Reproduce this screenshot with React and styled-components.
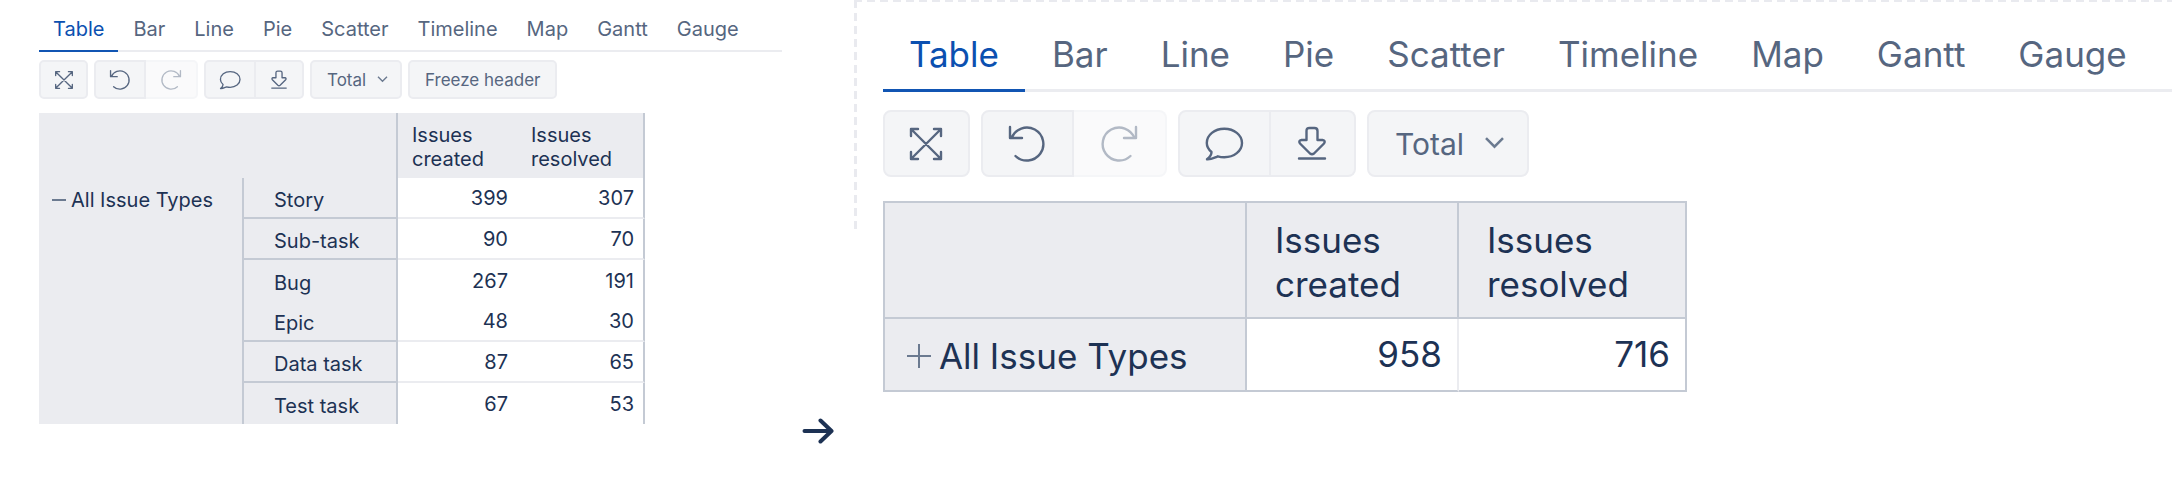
import React from 'react';
import styled, { createGlobalStyle, css, ThemeProvider } from 'styled-components';

const GlobalStyle = createGlobalStyle`
  * {
    box-sizing: border-box;
  }

  body {
    margin: 0;
    background: #ffffff;
    font-family: Inter, "Liberation Sans", sans-serif;
    color: #1d3254;
  }

  button, select {
    font-family: inherit;
  }
`;

// sizes of the two report previews
const small = {
  tabFont: 20,
  tabPad: 14,
  tabGap: 1,
  tabsHeight: 52,
  tabTop: 8,
  line: 2,
  toolbarTop: 8,
  toolbarGap: 6,
  buttonHeight: 39,
  buttonWidth: 49,
  wideWidth: 52,
  exportWidth: 48,
  radius: 5,
  icon: 20,
  buttonFont: 17,
  selectWidth: 92,
  selectPad: 15,
  chevron: 9,
  tableTop: 14,
  cellFont: 20,
  cellLine: 24,
  headHeight: 65,
  rowHeight: 41,
  rowPad: 30,
  cellPad: 14,
  cellTop: 4,
  numberPad: 9,
  numberBottom: 0,
  toggle: 14,
  toggleGap: 5,
};

const large = {
  tabFont: 35,
  tabPad: 26,
  tabGap: 1,
  tabsHeight: 92,
  tabTop: 18,
  line: 3,
  toolbarTop: 18,
  toolbarGap: 11,
  buttonHeight: 67,
  buttonWidth: 87,
  wideWidth: 93,
  exportWidth: 85,
  radius: 8,
  icon: 36,
  buttonFont: 30,
  selectWidth: 162,
  selectPad: 26,
  chevron: 17,
  tableTop: 24,
  cellFont: 35,
  cellLine: 44,
  headHeight: 116,
  rowHeight: 73,
  rowPad: 22,
  cellPad: 28,
  cellTop: 3,
  numberPad: 15,
  numberBottom: 2,
  toggle: 24,
  toggleGap: 8,
};

// ---------------- page ----------------

const Page = styled.main`
  display: grid;
  grid-template-columns: 36% 72px minmax(0, 1fr);
  min-height: 100vh;
  overflow: hidden;
`;

const BeforePanel = styled.section`
  padding-left: 39px;
`;

const AfterPanel = styled.section`
  padding-left: 29px;
  background-image:
    repeating-linear-gradient(to right, #e9eaef 0 8px, transparent 8px 13px),
    repeating-linear-gradient(to bottom, #e9eaef 0 8px, transparent 8px 13px);
  background-size: 100% 2px, 3px 229px;
  background-repeat: no-repeat;
`;

const ArrowColumn = styled.div`
  display: flex;
  align-items: flex-end;
  justify-content: center;
  padding-bottom: 59px;
`;

// ---------------- tabs ----------------

const Tabs = styled.nav`
  display: flex;
  gap: ${({ theme }) => theme.tabGap}px;
  height: ${({ theme }) => theme.tabsHeight}px;
  box-shadow: inset 0 -${({ theme }) => theme.line}px #ebecf0;
`;

const Tab = styled.button`
  padding: ${({ theme }) => theme.tabTop}px ${({ theme }) => theme.tabPad}px 0;
  border: 0;
  border-bottom: ${({ theme }) => theme.line}px solid ${({ $active }) => ($active ? '#1155b3' : 'transparent')};
  background: none;
  color: ${({ $active }) => ($active ? '#0b50b0' : '#566680')};
  font-size: ${({ theme }) => theme.tabFont}px;
  white-space: nowrap;
`;

// ---------------- toolbar ----------------

const Toolbar = styled.div`
  display: flex;
  gap: ${({ theme }) => theme.toolbarGap}px;
  margin-top: ${({ theme }) => theme.toolbarTop}px;
`;

const ButtonGroup = styled.div`
  display: flex;
`;

const control = css`
  height: ${({ theme }) => theme.buttonHeight}px;
  border: 2px solid #ebecf0;
  border-radius: ${({ theme }) => theme.radius}px;
  background: #f4f5f7;
  color: #566680;
  font-size: ${({ theme }) => theme.buttonFont}px;
`;

const IconButton = styled.button`
  ${control}
  display: flex;
  align-items: center;
  justify-content: center;
  width: ${({ theme, $size = 'buttonWidth' }) => theme[$size]}px;
  padding: 0;

  ${ButtonGroup} &:first-child {
    border-top-right-radius: 0;
    border-bottom-right-radius: 0;
  }

  ${ButtonGroup} &:last-child {
    border-left: 0;
    border-top-left-radius: 0;
    border-bottom-left-radius: 0;
  }

  &:disabled {
    opacity: 0.45;
  }
`;

const TextButton = styled.button`
  ${control}
  padding: 0 15px;
`;

const SelectBox = styled.div`
  display: grid;
  align-items: center;
  width: ${({ theme }) => theme.selectWidth}px;

  > * {
    grid-area: 1 / 1;
  }

  svg {
    justify-self: end;
    margin-right: ${({ theme }) => theme.selectPad}px;
    pointer-events: none;
  }
`;

const Select = styled.select`
  ${control}
  width: 100%;
  padding: 0 0 0 ${({ theme }) => theme.selectPad}px;
  appearance: none;
`;

const Icon = styled.svg`
  width: ${({ theme }) => theme.icon}px;
  height: ${({ theme }) => theme.icon}px;
  overflow: visible;
  fill: none;
  stroke: currentColor;
  stroke-width: 2.4;
  stroke-linecap: round;
  stroke-linejoin: round;
`;

const Chevron = styled.svg`
  width: ${({ theme }) => theme.chevron}px;
  height: ${({ theme }) => theme.chevron}px;
  overflow: visible;
  fill: none;
  stroke: #6b7a90;
  stroke-width: 2.4;
`;

// ---------------- table ----------------

const DataTable = styled.table`
  margin-top: ${({ theme }) => theme.tableTop}px;
  table-layout: fixed;
  border-spacing: 0;
  border: 0 solid #c4cad4;
  border-width: ${({ $framed }) => ($framed ? '2px 0 0 2px' : '0')};
  font-size: ${({ theme }) => theme.cellFont}px;
  line-height: ${({ theme }) => theme.cellLine}px;
`;

const Col = styled.col`
  width: ${({ $width }) => $width}px;
`;

const HeadCell = styled.th`
  height: ${({ theme }) => theme.headHeight}px;
  padding: 3px ${({ theme }) => theme.cellPad}px 0;
  border: 0 solid #c4cad4;
  border-right-width: ${({ $right }) => ($right ? 2 : 0)}px;
  border-bottom-width: ${({ $bottom }) => ($bottom ? 2 : 0)}px;
  background: #ebecf0;
  font-weight: 400;
  text-align: left;
`;

const RowHead = styled.th`
  height: ${({ theme }) => theme.rowHeight}px;
  padding: ${({ theme }) => theme.cellTop}px 0 0 ${({ theme }) => theme.rowPad}px;
  border-right: 2px solid #c4cad4;
  border-bottom: ${({ $line }) => ($line ? '2px solid #c4cad4' : '0')};
  background: #ebecf0;
  font-weight: 400;
  text-align: left;
  white-space: nowrap;
`;

const GroupHead = styled(RowHead)`
  padding: ${({ $top }) => ($top ? 10 : 2)}px 0 0 ${({ $top, theme }) => ($top ? 13 : theme.rowPad)}px;
  vertical-align: ${({ $top }) => ($top ? 'top' : 'middle')};
`;

const GroupLabel = styled.div`
  display: flex;
  align-items: center;
  gap: ${({ theme }) => theme.toggleGap}px;
`;

const Toggle = styled.button`
  display: flex;
  padding: 0;
  border: 0;
  background: none;
  color: #6b7a90;

  svg {
    width: ${({ theme }) => theme.toggle}px;
    height: ${({ theme }) => theme.toggle}px;
    stroke: currentColor;
    stroke-width: 2;
  }
`;

const NumberCell = styled.td`
  padding: 0 ${({ theme }) => theme.numberPad}px ${({ theme }) => theme.numberBottom}px 0;
  border: 0 solid ${({ $frame }) => ($frame ? '#c4cad4' : '#ebecf0')};
  border-right: ${({ $right }) => ($right ? `2px solid ${$right}` : '0')};
  border-bottom-width: ${({ $line }) => ($line ? 2 : 0)}px;
  text-align: right;
`;

// ---------------- icons ----------------

const ExpandIcon = () => (
  <Icon viewBox="0 0 36 36">
    <path d="M3 3 33 33M33 3 3 33M3 10V3h7M26 3h7v7M33 26v7h-7M10 33H3v-7" />
  </Icon>
);

const UndoIcon = () => (
  <Icon viewBox="0 0 36 36">
    <path d="M1 1v11h12M2.5 12A16.5 16.5 0 1 1 6.5 30" />
  </Icon>
);

const RedoIcon = () => (
  <Icon viewBox="0 0 36 36">
    <path d="M35 1v11H23M33.5 12A16.5 16.5 0 1 0 29.5 30" />
  </Icon>
);

const CommentIcon = () => (
  <Icon viewBox="0 0 36 36">
    <path d="M5.5 26C2.5 23.5.8 20.5.8 17 .8 9 8.5 2.8 18.3 2.8S36 9 36 17s-8 14.2-17.7 14.2c-2.3 0-4.2-.2-6.5-.9C8.5 31.5 5 33.7 1 33.3 3.5 31.5 5.5 29 5.5 26Z" />
  </Icon>
);

const DownloadIcon = () => (
  <Icon viewBox="0 0 36 36">
    <path d="M12.5 14V5q0-3 3-3h5q3 0 3 3v9h5q3.5.5 1.500 3.500L20 27.500q-2 1.500-4 0L6 17.500Q4 14.500 7.500 14ZM5 32.500h26" />
  </Icon>
);

// ---------------- shared parts ----------------

const tabNames = ['Table', 'Bar', 'Line', 'Pie', 'Scatter', 'Timeline', 'Map', 'Gantt', 'Gauge'];

const ReportTabs = () => (
  <Tabs>
    {tabNames.map((name) => (
      <Tab key={name} type="button" $active={name === 'Table'}>{name}</Tab>
    ))}
  </Tabs>
);

const ReportToolbar = ({ children }) => (
  <Toolbar>
    <IconButton type="button" aria-label="Full screen"><ExpandIcon /></IconButton>
    <ButtonGroup>
      <IconButton type="button" $size="wideWidth" aria-label="Undo"><UndoIcon /></IconButton>
      <IconButton type="button" $size="wideWidth" aria-label="Redo" disabled><RedoIcon /></IconButton>
    </ButtonGroup>
    <ButtonGroup>
      <IconButton type="button" $size="wideWidth" aria-label="Comment"><CommentIcon /></IconButton>
      <IconButton type="button" $size="exportWidth" aria-label="Export"><DownloadIcon /></IconButton>
    </ButtonGroup>
    <SelectBox>
      <Select aria-label="Total">
        <option>Total</option>
      </Select>
      <Chevron viewBox="0 0 16 16"><path d="M0 3l8 8 8-8" /></Chevron>
    </SelectBox>
    {children}
  </Toolbar>
);

const issueTypes = [
  { name: 'Story', created: 399, resolved: 307, line: true },
  { name: 'Sub-task', created: 90, resolved: 70, line: true },
  { name: 'Bug', created: 267, resolved: 191, line: false },
  { name: 'Epic', created: 48, resolved: 30, line: true },
  { name: 'Data task', created: 87, resolved: 65, line: true },
  { name: 'Test task', created: 67, resolved: 53, line: false },
];

// all issue types listed one by one
const ExpandedTable = () => (
  <DataTable>
    <colgroup>
      <Col $width={205} />
      <Col $width={154} />
      <Col $width={119} />
      <Col $width={128} />
    </colgroup>
    <thead>
      <tr>
        <HeadCell as="td" colSpan={2} $right />
        <HeadCell scope="col">Issues<br />created</HeadCell>
        <HeadCell scope="col" $right>Issues<br />resolved</HeadCell>
      </tr>
    </thead>
    <tbody>
      {issueTypes.map((type, index) => (
        <tr key={type.name}>
          {index === 0 && (
            <GroupHead scope="rowgroup" rowSpan={issueTypes.length} $top>
              <GroupLabel>
                <Toggle type="button" aria-label="Collapse">
                  <svg viewBox="0 0 14 14"><path d="M0 7h14" /></svg>
                </Toggle>
                All Issue Types
              </GroupLabel>
            </GroupHead>
          )}
          <RowHead scope="row" $line={type.line}>{type.name}</RowHead>
          <NumberCell $line={type.line}>{type.created}</NumberCell>
          <NumberCell $line={type.line} $right="#c4cad4">{type.resolved}</NumberCell>
        </tr>
      ))}
    </tbody>
  </DataTable>
);

// one summary row
const CollapsedTable = () => (
  <DataTable $framed>
    <colgroup>
      <Col $width={362} />
      <Col $width={212} />
      <Col $width={228} />
    </colgroup>
    <thead>
      <tr>
        <HeadCell as="td" $right $bottom />
        <HeadCell scope="col" $right $bottom>Issues<br />created</HeadCell>
        <HeadCell scope="col" $right $bottom>Issues<br />resolved</HeadCell>
      </tr>
    </thead>
    <tbody>
      <tr>
        <GroupHead scope="row" $line>
          <GroupLabel>
            <Toggle type="button" aria-label="Expand">
              <svg viewBox="0 0 24 24"><path d="M0 12h24M12 0v24" /></svg>
            </Toggle>
            All Issue Types
          </GroupLabel>
        </GroupHead>
        <NumberCell $frame $line $right="#ebecf0">958</NumberCell>
        <NumberCell $frame $line $right="#c4cad4">716</NumberCell>
      </tr>
    </tbody>
  </DataTable>
);

const App = () => {
  return (
    <>
      <GlobalStyle />
      <Page>
        <ThemeProvider theme={small}>
          <BeforePanel>
            <ReportTabs />
            <ReportToolbar>
              <TextButton type="button">Freeze header</TextButton>
            </ReportToolbar>
            <ExpandedTable />
          </BeforePanel>
        </ThemeProvider>
        <ArrowColumn>
          <svg width="32" height="28" viewBox="0 0 32 28" fill="none" stroke="#1d3254" strokeWidth="4" strokeLinecap="round" strokeLinejoin="round">
            <path d="M2.5 14H29M18.5 3.5 29.5 14 18.5 24.5" />
          </svg>
        </ArrowColumn>
        <ThemeProvider theme={large}>
          <AfterPanel>
            <ReportTabs />
            <ReportToolbar />
            <CollapsedTable />
          </AfterPanel>
        </ThemeProvider>
      </Page>
    </>
  );
};

export default App;
